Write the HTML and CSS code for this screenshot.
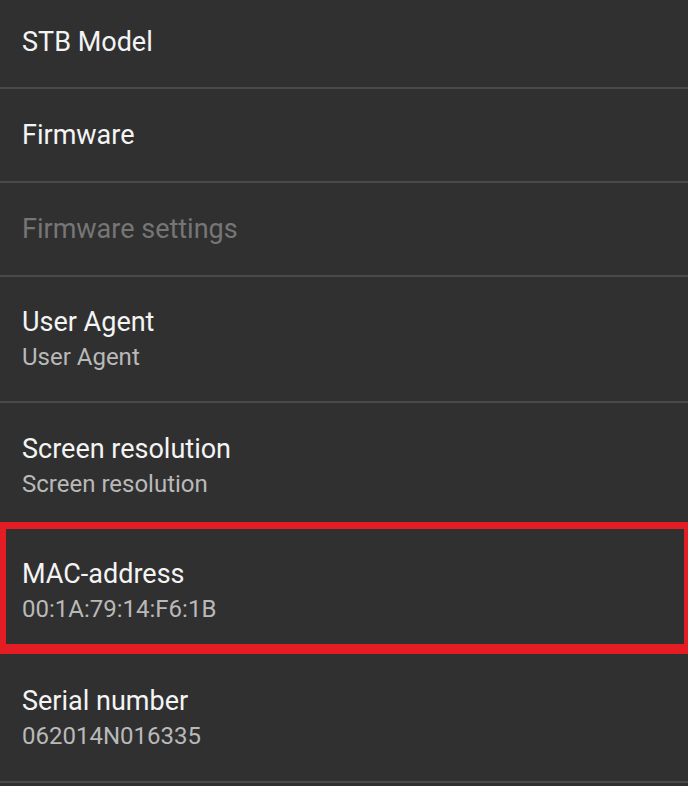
FILE: index.html
```html
<!DOCTYPE html>
<html>
<head>
<meta charset="utf-8">
<link rel="stylesheet" href="styles.css">
</head>
<body>
<div class="list">
  <div class="row row-first"><div class="title">STB Model</div></div>
  <div class="divider"></div>
  <div class="row row-single"><div class="title">Firmware</div></div>
  <div class="divider"></div>
  <div class="row row-single"><div class="title disabled">Firmware settings</div></div>
  <div class="divider"></div>
  <div class="row row-double"><div class="title">User Agent</div><div class="sub">User Agent</div></div>
  <div class="divider"></div>
  <div class="row row-screen"><div class="title">Screen resolution</div><div class="sub">Screen resolution</div></div>
  <div class="row row-mac"><div class="title">MAC-address</div><div class="sub">00:1A:79:14:F6:1B</div></div>
  <div class="row row-serial"><div class="title">Serial number</div><div class="sub">062014N016335</div></div>
  <div class="divider"></div>
</div>
</body>
</html>
```
FILE: styles.css
```css
html, body {
  margin: 0;
  padding: 0;
  background: #303030;
  height: 100%;
  overflow: hidden;
}
body {
  font-family: Roboto, "Noto Sans", sans-serif;
}
.list {
  display: flex;
  flex-direction: column;
}
.row {
  display: flex;
  flex-direction: column;
  justify-content: center;
  padding-left: 22px;
  box-sizing: border-box;
}
.row-first { height: 87px; padding-bottom: 4px; }
.row-single { height: 92px; }
.row-double { height: 124px; }
.row-screen { height: 119px; padding-top: 6px; }
.row-mac {
  height: 132px;
  border-style: solid;
  border-color: #e41d25;
  border-width: 7px 4px 10px 6px;
  padding-left: 16px;
  padding-top: 8px;
}
.row-serial { height: 127px; padding-top: 0; }
.divider {
  height: 2px;
  background: #4a4a4a;
}
.title {
  font-size: 27px;
  line-height: 32px;
  color: #f4f4f4;
}
.title.disabled {
  color: #767676;
}
.sub {
  font-size: 24px;
  line-height: 30px;
  margin-top: 4px;
  color: #b9b9b9;
}
```
